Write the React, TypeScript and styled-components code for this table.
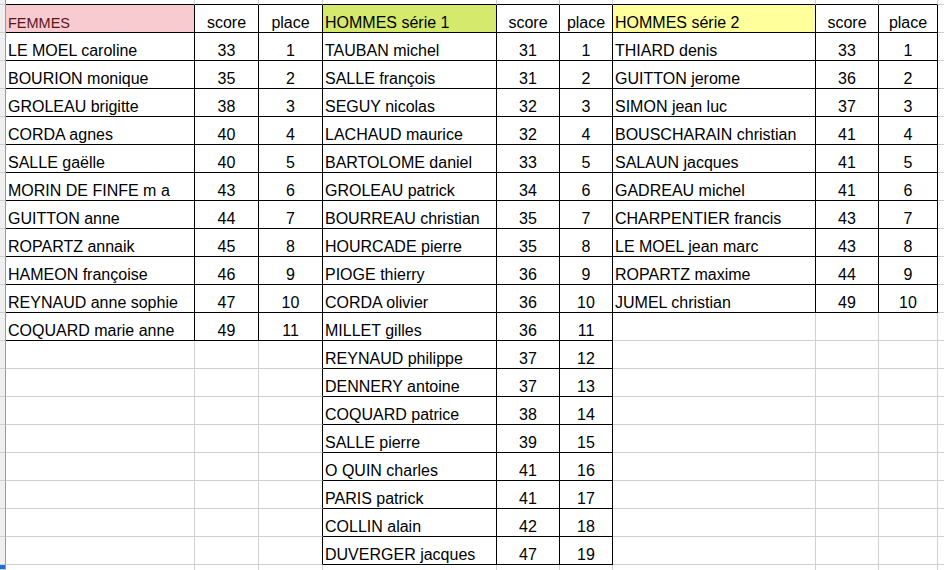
import React from 'react';
import styled, { createGlobalStyle } from 'styled-components';

const GlobalStyle = createGlobalStyle`
  html, body {
    margin: 0;
    padding: 0;
    background: #fff;
    overflow: hidden;
  }
`;

type Row = [string, number, number];

const femmes: Row[] = [
  ['LE MOEL caroline', 33, 1],
  ['BOURION monique', 35, 2],
  ['GROLEAU brigitte', 38, 3],
  ['CORDA agnes', 40, 4],
  ['SALLE gaëlle', 40, 5],
  ['MORIN DE FINFE m a', 43, 6],
  ['GUITTON anne', 44, 7],
  ['ROPARTZ annaik', 45, 8],
  ['HAMEON françoise', 46, 9],
  ['REYNAUD anne sophie', 47, 10],
  ['COQUARD marie anne', 49, 11],
];

const serie1: Row[] = [
  ['TAUBAN michel', 31, 1],
  ['SALLE françois', 31, 2],
  ['SEGUY nicolas', 32, 3],
  ['LACHAUD maurice', 32, 4],
  ['BARTOLOME daniel', 33, 5],
  ['GROLEAU patrick', 34, 6],
  ['BOURREAU christian', 35, 7],
  ['HOURCADE pierre', 35, 8],
  ['PIOGE thierry', 36, 9],
  ['CORDA olivier', 36, 10],
  ['MILLET gilles', 36, 11],
  ['REYNAUD philippe', 37, 12],
  ['DENNERY antoine', 37, 13],
  ['COQUARD patrice', 38, 14],
  ['SALLE pierre', 39, 15],
  ['O QUIN charles', 41, 16],
  ['PARIS patrick', 41, 17],
  ['COLLIN alain', 42, 18],
  ['DUVERGER jacques', 47, 19],
];

const serie2: Row[] = [
  ['THIARD denis', 33, 1],
  ['GUITTON jerome', 36, 2],
  ['SIMON jean luc', 37, 3],
  ['BOUSCHARAIN christian', 41, 4],
  ['SALAUN jacques', 41, 5],
  ['GADREAU michel', 41, 6],
  ['CHARPENTIER francis', 43, 7],
  ['LE MOEL jean marc', 43, 8],
  ['ROPARTZ maxime', 44, 9],
  ['JUMEL christian', 49, 10],
];

interface Block {
  col: number;
  title: string;
  bg: string;
  color: string;
  small?: boolean;
  rows: Row[];
}

const blocks: Block[] = [
  { col: 1, title: 'FEMMES', bg: '#f8cbd0', color: '#5e1518', small: true, rows: femmes },
  { col: 4, title: 'HOMMES série 1', bg: '#d5ea6c', color: '#000', rows: serie1 },
  { col: 7, title: 'HOMMES série 2', bg: '#ffff9c', color: '#000', rows: serie2 },
];

// grid: col 0 = row header stub, 1..9 = sheet columns, 10 = filler
// rows: 0 = partial top row, 1 = header, 2.. data, 21 = partial bottom
const COL_COUNT = 11;
const ROW_COUNT = 22;

const findBlock = (r: number, c: number) =>
  blocks.find(b => c >= b.col && c < b.col + 3 && r >= 1 && r <= b.rows.length + 1);

const Sheet = styled.div`
  display: grid;
  grid-template-columns: 6px 189px 64px 64px 174px 63px 53px 203px 63px 59px 1fr;
  grid-template-rows: 5px repeat(20, 28px) 1fr;
  width: 944px;
  height: 570px;
  font-family: "Liberation Sans", Arial, sans-serif;
  font-size: 16px;
  color: #000;
`;

const Cell = styled.div<{
  $right: 'dark' | 'light' | 'none';
  $bottom: 'dark' | 'light' | 'none';
  $bg?: string;
  $align: 'left' | 'center';
  $color?: string;
  $small?: boolean;
}>`
  box-sizing: border-box;
  display: flex;
  align-items: flex-end;
  justify-content: ${({ $align }) => ($align === 'center' ? 'center' : 'flex-start')};
  padding: 0 2px 0 2px;
  line-height: 18px;
  white-space: nowrap;
  overflow: visible;
  background: ${({ $bg }) => $bg || '#fff'};
  color: ${({ $color }) => $color || '#000'};
  font-size: ${({ $small }) => ($small ? '14.5px' : '16px')};
  border-right: ${({ $right }) =>
    $right === 'none' ? '0' : `1px solid ${$right === 'dark' ? '#000' : '#d0d0d0'}`};
  border-bottom: ${({ $bottom }) =>
    $bottom === 'none' ? '0' : `1px solid ${$bottom === 'dark' ? '#000' : '#d0d0d0'}`};
`;

const Stub = styled.div<{ $last?: boolean }>`
  box-sizing: border-box;
  background: ${({ $last }) => ($last ? '#1a73d1' : '#efefef')};
  border-right: 1px solid #9c9c9c;
  border-bottom: 1px solid #cfcfcf;
`;

const App: React.FC = () => {
  const cells: React.ReactNode[] = [];

  for (let r = 0; r < ROW_COUNT; r++) {
    for (let c = 0; c < COL_COUNT; c++) {
      const key = `${r}-${c}`;
      if (c === 0) {
        cells.push(<Stub key={key} $last={r === ROW_COUNT - 1} />);
        continue;
      }
      const block = findBlock(r, c);
      const right =
        c === COL_COUNT - 1 ? 'none' : block || findBlock(r, c + 1) ? 'dark' : 'light';
      const bottom =
        r === ROW_COUNT - 1 ? 'none' : block || findBlock(r + 1, c) ? 'dark' : 'light';

      let text: React.ReactNode = null;
      let align: 'left' | 'center' = 'left';
      let bg: string | undefined;
      let color: string | undefined;
      let small = false;

      if (block) {
        const k = c - block.col;
        if (r === 1) {
          if (k === 0) {
            text = block.title;
            bg = block.bg;
            color = block.color;
            small = !!block.small;
          } else {
            text = k === 1 ? 'score' : 'place';
            align = 'center';
          }
        } else {
          const row = block.rows[r - 2];
          text = row[k];
          align = k === 0 ? 'left' : 'center';
        }
      }

      cells.push(
        <Cell
          key={key}
          $right={right}
          $bottom={bottom}
          $bg={bg}
          $align={align}
          $color={color}
          $small={small}
        >
          {text}
        </Cell>
      );
    }
  }

  return (
    <>
      <GlobalStyle />
      <Sheet>{cells}</Sheet>
    </>
  );
};

export default App;
